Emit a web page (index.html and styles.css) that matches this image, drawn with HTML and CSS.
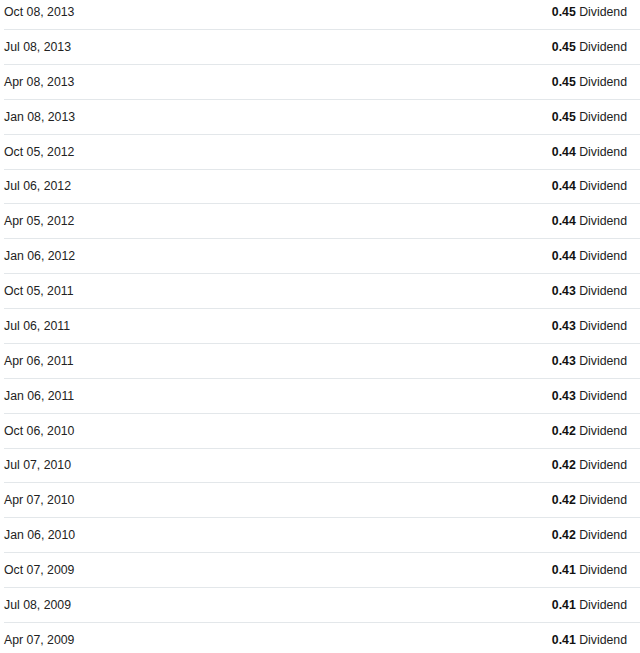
FILE: index.html
```html
<!DOCTYPE html>
<html>
<head>
<meta charset="utf-8">
<link rel="stylesheet" href="styles.css">
</head>
<body>
<ul class="list">
<li class="row"><span class="date">Oct 08, 2013</span><span class="amt"><b>0.45</b> Dividend</span></li>
<li class="row"><span class="date">Jul 08, 2013</span><span class="amt"><b>0.45</b> Dividend</span></li>
<li class="row"><span class="date">Apr 08, 2013</span><span class="amt"><b>0.45</b> Dividend</span></li>
<li class="row"><span class="date">Jan 08, 2013</span><span class="amt"><b>0.45</b> Dividend</span></li>
<li class="row"><span class="date">Oct 05, 2012</span><span class="amt"><b>0.44</b> Dividend</span></li>
<li class="row"><span class="date">Jul 06, 2012</span><span class="amt"><b>0.44</b> Dividend</span></li>
<li class="row"><span class="date">Apr 05, 2012</span><span class="amt"><b>0.44</b> Dividend</span></li>
<li class="row"><span class="date">Jan 06, 2012</span><span class="amt"><b>0.44</b> Dividend</span></li>
<li class="row"><span class="date">Oct 05, 2011</span><span class="amt"><b>0.43</b> Dividend</span></li>
<li class="row"><span class="date">Jul 06, 2011</span><span class="amt"><b>0.43</b> Dividend</span></li>
<li class="row"><span class="date">Apr 06, 2011</span><span class="amt"><b>0.43</b> Dividend</span></li>
<li class="row"><span class="date">Jan 06, 2011</span><span class="amt"><b>0.43</b> Dividend</span></li>
<li class="row"><span class="date">Oct 06, 2010</span><span class="amt"><b>0.42</b> Dividend</span></li>
<li class="row"><span class="date">Jul 07, 2010</span><span class="amt"><b>0.42</b> Dividend</span></li>
<li class="row"><span class="date">Apr 07, 2010</span><span class="amt"><b>0.42</b> Dividend</span></li>
<li class="row"><span class="date">Jan 06, 2010</span><span class="amt"><b>0.42</b> Dividend</span></li>
<li class="row"><span class="date">Oct 07, 2009</span><span class="amt"><b>0.41</b> Dividend</span></li>
<li class="row"><span class="date">Jul 08, 2009</span><span class="amt"><b>0.41</b> Dividend</span></li>
<li class="row"><span class="date">Apr 07, 2009</span><span class="amt"><b>0.41</b> Dividend</span></li>
</ul>
</body>
</html>
```
FILE: styles.css
```css
html, body {
  margin: 0;
  padding: 0;
  background: #fff;
}
body {
  font-family: "Liberation Sans", Arial, sans-serif;
  font-size: 12.3px;
  color: #222;
  overflow: hidden;
}
.list {
  list-style: none;
  margin: -4.875px 0 0 4px;
  padding: 0;
}
.row {
  display: flex;
  justify-content: space-between;
  align-items: center;
  height: 33.875px;
  border-bottom: 1px solid #e3e7ea;
  padding-right: 13px;
}
.amt b {
  font-weight: bold;
  color: #111;
}
```
